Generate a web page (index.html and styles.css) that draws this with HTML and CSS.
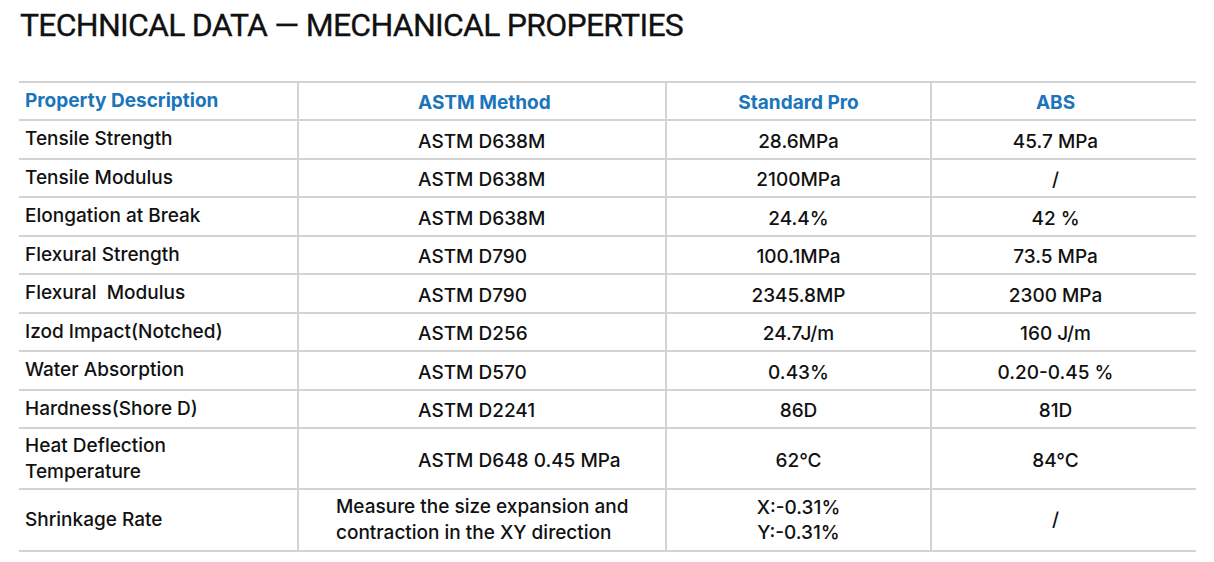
FILE: index.html
```html
<!DOCTYPE html>
<html lang="en">
<head>
<meta charset="utf-8">
<title>Technical Data — Mechanical Properties</title>
<link rel="stylesheet" href="styles.css">
</head>
<body>
<main class="page">
  <h1 class="title">TECHNICAL DATA — MECHANICAL PROPERTIES</h1>
  <table class="data">
    <colgroup>
      <col class="c1"><col class="c2"><col class="c3"><col class="c4">
    </colgroup>
    <thead>
      <tr class="head">
        <th class="prop">Property Description</th>
        <th class="method">ASTM Method</th>
        <th class="val">Standard Pro</th>
        <th class="abs">ABS</th>
      </tr>
    </thead>
    <tbody>
      <tr><td class="prop">Tensile Strength</td><td class="method">ASTM D638M</td><td class="val">28.6MPa</td><td class="abs">45.7 MPa</td></tr>
      <tr><td class="prop">Tensile Modulus</td><td class="method">ASTM D638M</td><td class="val">2100MPa</td><td class="abs">/</td></tr>
      <tr><td class="prop">Elongation at Break</td><td class="method">ASTM D638M</td><td class="val">24.4%</td><td class="abs">42 %</td></tr>
      <tr><td class="prop">Flexural Strength</td><td class="method">ASTM D790</td><td class="val">100.1MPa</td><td class="abs">73.5 MPa</td></tr>
      <tr><td class="prop">Flexural&nbsp; Modulus</td><td class="method">ASTM D790</td><td class="val">2345.8MP</td><td class="abs">2300 MPa</td></tr>
      <tr><td class="prop">Izod Impact(Notched)</td><td class="method">ASTM D256</td><td class="val">24.7J/m</td><td class="abs">160 J/m</td></tr>
      <tr><td class="prop">Water Absorption</td><td class="method">ASTM D570</td><td class="val">0.43%</td><td class="abs">0.20-0.45 %</td></tr>
      <tr><td class="prop">Hardness(Shore D)</td><td class="method">ASTM D2241</td><td class="val">86D</td><td class="abs">81D</td></tr>
      <tr class="heat"><td class="prop">Heat Deflection<br>Temperature</td><td class="method">ASTM D648 0.45 MPa</td><td class="val">62°C</td><td class="abs">84°C</td></tr>
      <tr class="shrink"><td class="prop">Shrinkage Rate</td><td class="method wide">Measure the size expansion and<br>contraction in the XY direction</td><td class="val stack">X:-0.31%<br>Y:-0.31%</td><td class="abs">/</td></tr>
    </tbody>
  </table>
</main>
</body>
</html>
```

FILE: styles.css
```css
html, body {
  margin: 0;
  padding: 0;
  background: #ffffff;
}

.page {
  padding: 6px 18px 0 19px;
  font-family: Inter, "Noto Sans", "Liberation Sans", sans-serif;
  color: #111111;
}

.title {
  margin: 0 0 0 1px;
  height: 75px;
  font-family: Roboto, "Liberation Sans", sans-serif;
  font-weight: 400;
  font-size: 32px;
  line-height: 38px;
  letter-spacing: -0.75px;
  color: #111111;
  -webkit-text-stroke: 0.3px #111111;
}

.data {
  width: 1177px;
  border-collapse: collapse;
  table-layout: fixed;
  font-size: 19px;
  font-weight: 500;
}

.c1 { width: 279px; }
.c2 { width: 368px; }
.c3 { width: 265px; }
.c4 { width: 265px; }

.data th,
.data td {
  border-top: 2px solid #d3d3d3;
  border-bottom: 2px solid #d3d3d3;
  border-left: 2px solid #d3d3d3;
  padding: 0;
  vertical-align: middle;
  line-height: 26px;
}

.data th:first-child,
.data td:first-child {
  border-left: none;
}

.data td {
  height: 31.5px;
  padding-top: 5px;
}

.data td.prop {
  padding-top: 0;
  height: 36.5px;
}

.data .head th {
  height: 32px;
  padding-top: 4px;
  color: #1b75bb;
  font-weight: 700;
}

.data .head th.prop {
  padding-top: 0;
  height: 36px;
}

.data .prop {
  text-align: left;
  padding-left: 6px;
}

.data .method {
  text-align: left;
  padding-left: 119px;
}

.data .method.wide {
  padding-left: 37px;
}

.data .val {
  text-align: center;
}

.data .abs {
  text-align: center;
  padding-right: 17px;
}

.data .heat td {
  height: 54px;
}

.data .heat td.prop {
  height: 59px;
}

.data .shrink td {
  height: 60px;
  padding-top: 0;
}

.data td.stack {
  line-height: 25px;
}
```
